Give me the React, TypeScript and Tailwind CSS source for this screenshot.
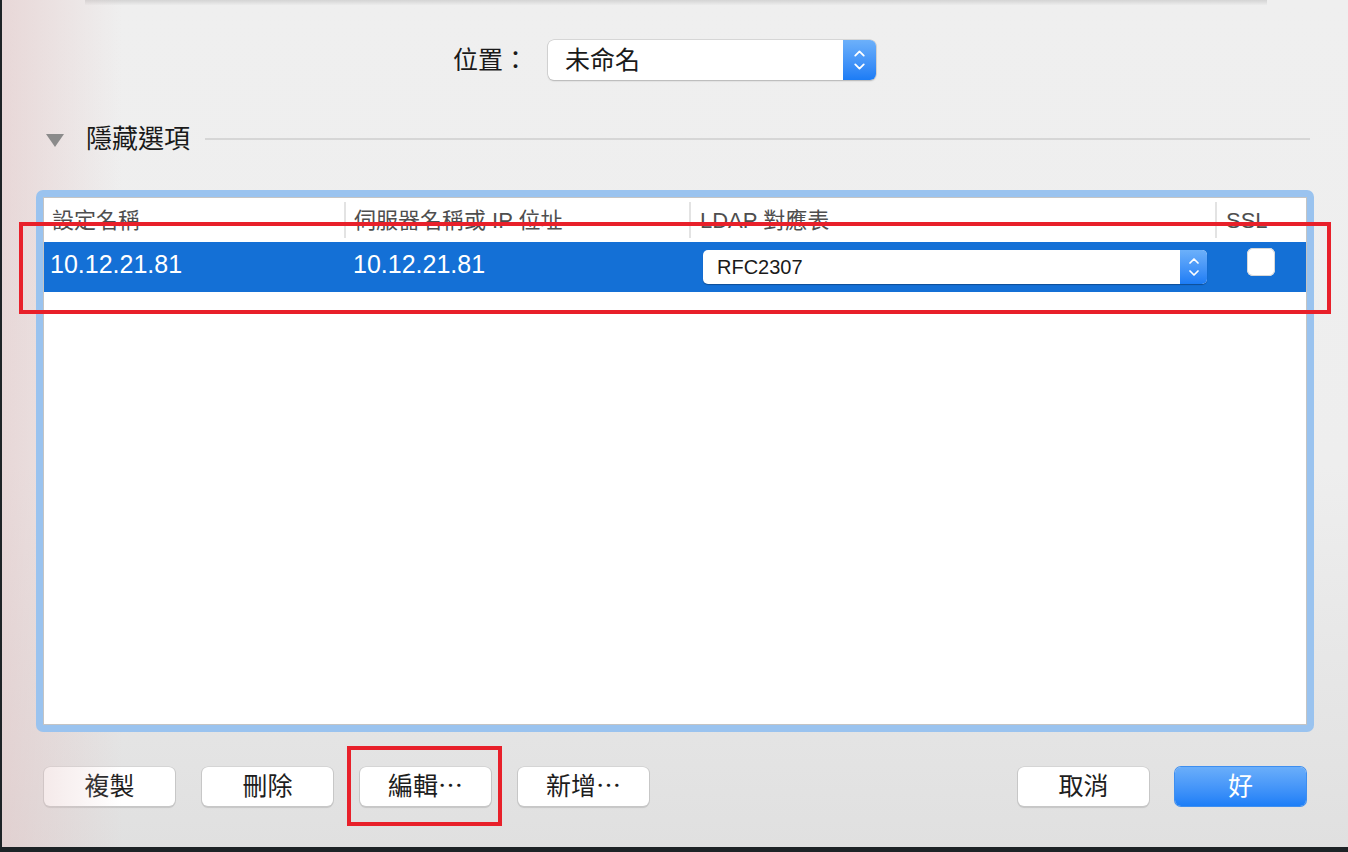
import { ChevronUp, ChevronDown } from 'lucide-react'

const font = 'font-["Liberation_Sans","Noto_Sans_CJK_TC",sans-serif]'

function Stepper({ small }: { small?: boolean }) {
  return (
    <div
      className={`flex flex-col items-center justify-center bg-gradient-to-b from-[#6cb0fa] to-[#1b7cf5] text-white ${
        small ? 'w-[27px] rounded-r-[5px]' : 'w-[33px] rounded-r-[6px]'
      }`}
    >
      <ChevronUp className={small ? '-mb-[4px] h-[16px] w-[16px]' : '-mb-[4px] h-[17px] w-[17px]'} strokeWidth={2.6} />
      <ChevronDown className={small ? 'h-[16px] w-[16px]' : 'h-[17px] w-[17px]'} strokeWidth={2.6} />
    </div>
  )
}

function PushButton({ label, primary }: { label: string; primary?: boolean }) {
  return (
    <button
      type="button"
      className={`flex h-[39px] w-[131px] items-center justify-center rounded-[6px] text-[25px] leading-none ${
        primary
          ? 'bg-gradient-to-b from-[#6aaefa] to-[#1b7ef7] text-white shadow-[0_0_0_1px_#3d8ef0]'
          : 'bg-white text-[#1d1d1d] shadow-[0_0.5px_0_1px_#c7c7c7,0_1.5px_1px_rgba(0,0,0,0.12)]'
      }`}
    >
      {label}
    </button>
  )
}

export default function App() {
  return (
    <div className={`h-[852px] w-[1348px] overflow-hidden bg-[#1d2326] ${font}`}>
      <div className="relative ml-[2px] flex h-[847px] w-[1346px] flex-col bg-[linear-gradient(to_bottom,#efefef_0%,#eeeeee_55%,#e0e0e0_100%)]">
        {/* desktop tint through the left edge */}
        <div className="pointer-events-none absolute inset-y-0 left-0 w-[120px] bg-gradient-to-r from-[rgba(226,196,196,0.55)] to-transparent" />

        {/* bottom edge of the sheet above */}
        <div className="ml-[83px] h-[5px] w-[1182px] bg-gradient-to-b from-[#d4d4d4] to-[#ececec]" />

        <div className="relative mt-[35px] flex items-center pl-[451px]">
          <span className="text-[25px] leading-none text-[#1a1a1a]">位置：</span>
          <div className="ml-[20px] flex h-[40px] w-[328px] rounded-[6px] bg-white shadow-[0_0_0_0.5px_#bdbdbd,0_1px_1.5px_rgba(0,0,0,0.25)]">
            <span className="flex-1 pl-[17px] text-[25px] leading-[40px] text-[#1a1a1a]">未命名</span>
            <Stepper />
          </div>
        </div>

        <div className="relative mt-[39px] flex items-center pl-[44px]">
          <svg width="18" height="13" viewBox="0 0 18 13" className="mt-[2px]">
            <path d="M0 0 H18 L9 13 Z" fill="#8b8b8b" />
          </svg>
          <span className="ml-[22px] text-[26px] leading-[40px] text-[#1a1a1a]">隱藏選項</span>
          <div className="ml-[15px] mr-[38px] h-[2px] flex-1 bg-[#d6d6d6]" />
        </div>

        {/* table with focus ring */}
        <div className="relative mx-[34px] mt-[31px] h-[542px] rounded-[7px] bg-[#9ac3ef] p-[7px]">
          <div className="flex h-full flex-col border border-[#c4c4c4] bg-white">
            <div className="flex h-[44px] items-center text-[22px] text-[#4e4e4e]">
              <div className="flex h-[36px] w-[302px] items-center border-r-[2px] border-[#e3e3e3] pl-[8px]">設定名稱</div>
              <div className="flex h-[36px] w-[345px] items-center border-r-[2px] border-[#e3e3e3] pl-[8px]">伺服器名稱或 IP 位址</div>
              <div className="flex h-[36px] w-[526px] items-center border-r-[2px] border-[#e3e3e3] pl-[9px]">LDAP 對應表</div>
              <div className="flex h-[36px] flex-1 items-center pl-[9px]">SSL</div>
            </div>
            <div className="flex h-[50px] items-center bg-[#1470d6] text-white">
              <div className="w-[302px] self-start pt-[7px] pl-[6px] text-[25px] leading-[30px]">10.12.21.81</div>
              <div className="w-[345px] self-start pt-[7px] pl-[7px] text-[25px] leading-[30px]">10.12.21.81</div>
              <div className="flex w-[526px] items-center pl-[12px]">
                <div className="flex h-[34px] w-[504px] rounded-[5px] bg-white shadow-[0_1px_1px_rgba(0,0,0,0.3)]">
                  <span className="flex-1 pl-[14px] text-[20px] leading-[34px] text-[#1a1a1a]">RFC2307</span>
                  <Stepper small />
                </div>
              </div>
              <div className="flex flex-1 justify-center self-start pt-[6px] pr-[2px]">
                <div className="h-[28px] w-[28px] rounded-[6px] bg-white shadow-[inset_0_0_0_1px_#d8d8d8]" />
              </div>
            </div>
            <div className="flex-1" />
          </div>
        </div>

        <div className="mt-[35px] flex items-center pl-[42px] pr-[42px]">
          <div className="flex gap-[27px]">
            <PushButton label="複製" />
            <PushButton label="刪除" />
            <PushButton label="編輯⋯" />
            <PushButton label="新增⋯" />
          </div>
          <div className="ml-auto flex gap-[26px]">
            <PushButton label="取消" />
            <PushButton label="好" primary />
          </div>
        </div>

        {/* annotation boxes */}
        <div className="pointer-events-none absolute left-[17px] top-[222px] h-[92px] w-[1312px] border-[4px] border-[#e8202a]" />
        <div className="pointer-events-none absolute left-[345px] top-[746px] h-[80px] w-[155px] border-[4px] border-[#e8202a]" />
      </div>
    </div>
  )
}
